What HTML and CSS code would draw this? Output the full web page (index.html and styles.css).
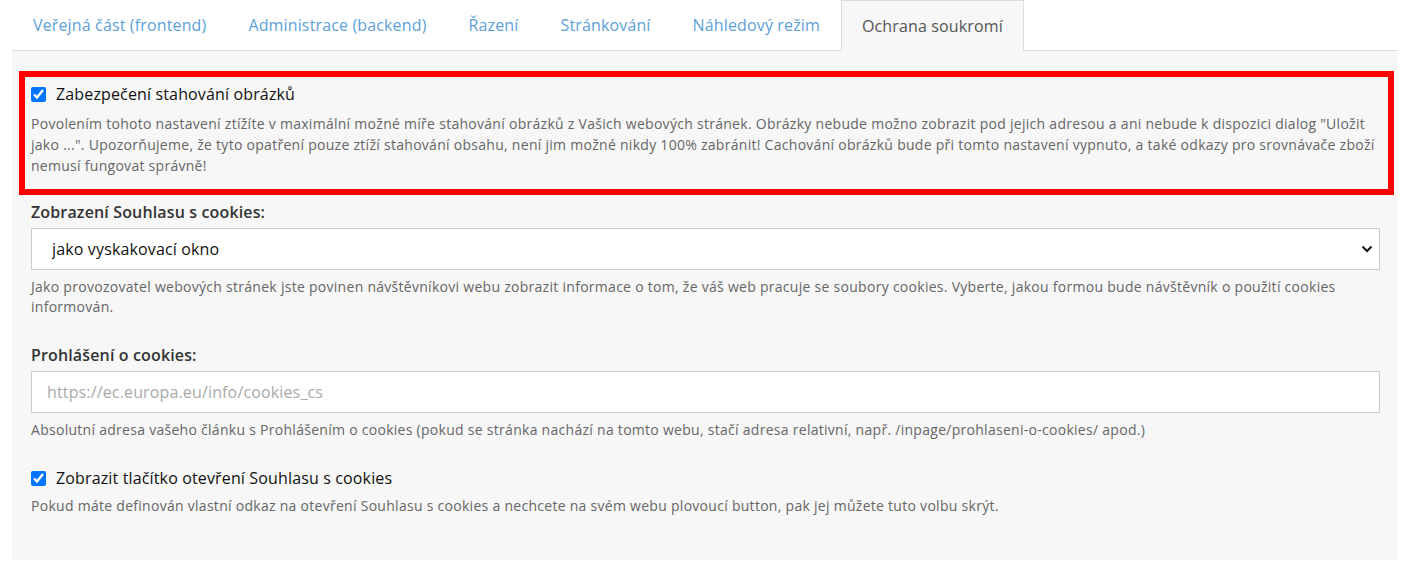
FILE: index.html
```html
<!DOCTYPE HTML>
<html>
<head>
	<meta charset="utf-8">
	<title>Ochrana soukromí</title>
	<link rel="stylesheet" href="styles.css">
</head>
<body>

	<ul class="tabs">
		<li class="tab"><a href="#">Veřejná část (frontend)</a></li>
		<li class="tab"><a href="#">Administrace (backend)</a></li>
		<li class="tab"><a href="#">Řazení</a></li>
		<li class="tab"><a href="#">Stránkování</a></li>
		<li class="tab"><a href="#">Náhledový režim</a></li>
		<li class="tab active"><a href="#">Ochrana soukromí</a></li>
	</ul>

	<div class="panel">

		<div class="group highlight">
			<label class="check"><input type="checkbox" checked> Zabezpečení stahování obrázků</label>
			<p class="help first">Povolením tohoto nastavení ztížíte v maximální možné míře stahování obrázků z Vašich webových stránek. Obrázky nebude možno zobrazit pod jejich adresou a ani nebude k dispozici dialog "Uložit jako ...". Upozorňujeme, že tyto opatření pouze ztíží stahování obsahu, není jim možné nikdy 100% zabránit! Cachování obrázků bude při tomto nastavení vypnuto, a také odkazy pro srovnávače zboží nemusí fungovat správně!</p>
		</div>

		<div class="group">
			<label class="title" for="cookies-mode">Zobrazení Souhlasu s cookies:</label>
			<select id="cookies-mode" class="field select">
				<option>jako vyskakovací okno</option>
				<option>jako lišta</option>
			</select>
			<p class="help">Jako provozovatel webových stránek jste povinen návštěvníkovi webu zobrazit informace o tom, že váš web pracuje se soubory cookies. Vyberte, jakou formou bude návštěvník o použití cookies informován.</p>
		</div>

		<div class="group">
			<label class="title" for="cookies-url">Prohlášení o cookies:</label>
			<input id="cookies-url" class="field text" type="text" placeholder="https://ec.europa.eu/info/cookies_cs">
			<p class="help">Absolutní adresa vašeho článku s Prohlášením o cookies (pokud se stránka nachází na tomto webu, stačí adresa relativní, např. /inpage/prohlaseni-o-cookies/ apod.)</p>
		</div>

		<div class="group">
			<label class="check"><input type="checkbox" checked> Zobrazit tlačítko otevření Souhlasu s cookies</label>
			<p class="help">Pokud máte definován vlastní odkaz na otevření Souhlasu s cookies a nechcete na svém webu plovoucí button, pak jej můžete tuto volbu skrýt.</p>
		</div>

	</div>

</body>
</html>
```

FILE: styles.css
```css
body {
	margin: 0 12px;
	font-family: "Open Sans", "Liberation Sans", sans-serif;
	letter-spacing: 0.009em;
	background: #fff;
	color: #111;
}

/* tabs */
.tabs {
	display: flex;
	list-style: none;
	margin: 0;
	padding: 0;
	border-bottom: 1px solid #ddd;
}
.tab {
	margin-bottom: -1px;
}
.tab a {
	display: block;
	padding: 0 20px;
	line-height: 49px;
	font-size: 16px;
	color: #5d9fd8;
	text-decoration: none;
	border: 1px solid transparent;
	border-bottom: none;
}
.tab.active a {
	color: #555;
	background: #f7f7f7;
	border-color: #ddd;
	line-height: 50px;
}

/* panel */
.panel {
	background: #f7f7f7;
	padding: 20px 18px 44px 19px;
}
.group {
	margin-bottom: 27px;
}
.group:last-child {
	margin-bottom: 0;
}
.group.highlight {
	margin: 0 -14px 6px -12px;
	border: 6px solid #f00;
	padding: 6px 12px 13px 6px;
}

.check {
	display: flex;
	align-items: center;
	font-size: 16px;
	line-height: 22px;
	color: #111;
}
.check input {
	width: 15px;
	height: 15px;
	margin: 0 10px 0 0;
	accent-color: #0075ff;
}

.title {
	display: block;
	font-size: 16px;
	font-weight: 600;
	line-height: 22px;
	color: #333;
	margin-bottom: 5px;
}

.help {
	margin: 7px 0 0;
	font-size: 14px;
	line-height: 20px;
	letter-spacing: 0.02em;
	color: #666;
}
.help.first {
	margin-top: 8px;
	line-height: 21px;
}

.field {
	display: block;
	box-sizing: border-box;
	width: 100%;
	height: 42px;
	margin: 0;
	border: 1px solid #ccc;
	border-radius: 0;
	background-color: #fff;
	font-family: inherit;
	font-size: 16px;
	letter-spacing: inherit;
	color: #111;
	outline: none;
}
.select {
	-webkit-appearance: none;
	appearance: none;
	padding: 0 30px 0 20px;
	background-image: url("data:image/svg+xml,%3Csvg xmlns='http://www.w3.org/2000/svg' width='12' height='8' viewBox='0 0 12 8'%3E%3Cpath d='M1.5 1.5 6 6l4.5-4.5' fill='none' stroke='%23111' stroke-width='2'/%3E%3C/svg%3E");
	background-repeat: no-repeat;
	background-position: right 6px center;
}
.text {
	margin-top: 1px;
	padding: 0 15px;
}
.text::placeholder {
	color: #aaa;
}
```
